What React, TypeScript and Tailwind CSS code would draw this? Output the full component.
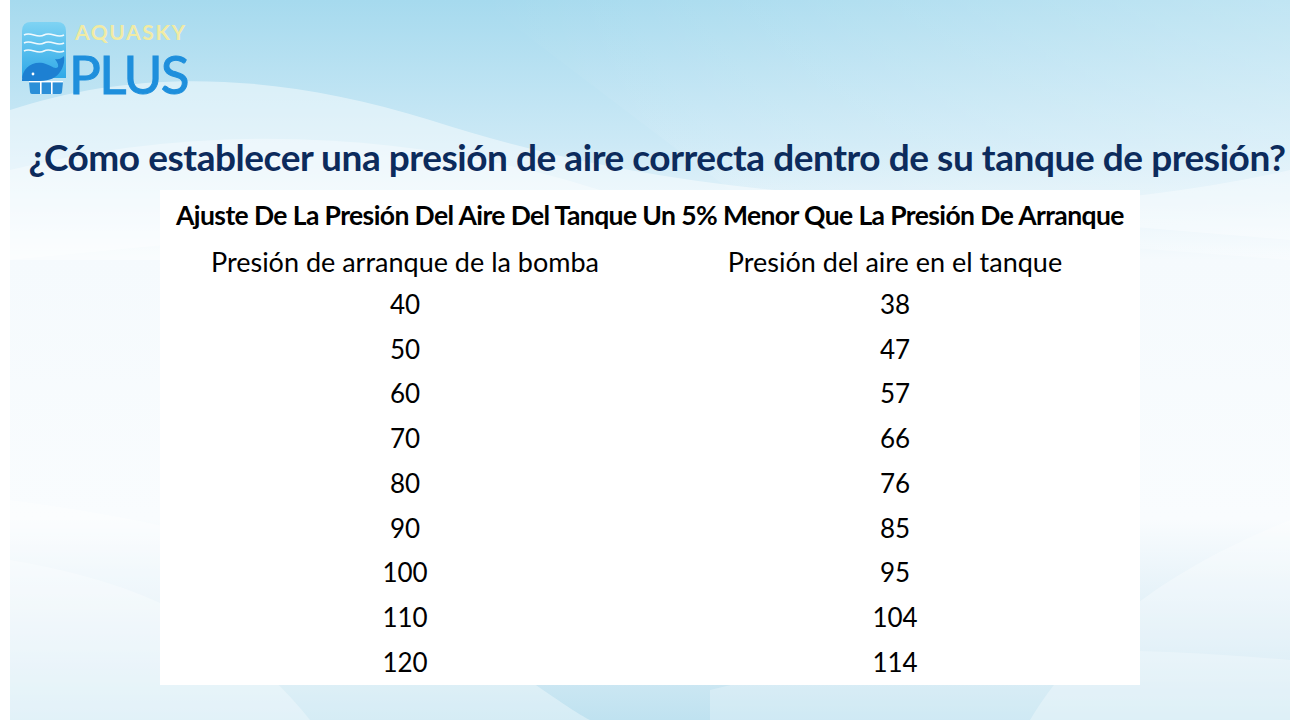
import React from 'react';

const rows: [number, number][] = [
  [40, 38],
  [50, 47],
  [60, 57],
  [70, 66],
  [80, 76],
  [90, 85],
  [100, 95],
  [110, 104],
  [120, 114],
];

// fondo con ondas claras, solo decorativo
function Backdrop() {
  return (
    <svg className="absolute inset-0 h-full w-full" viewBox="0 0 1280 720" preserveAspectRatio="none">
      <defs>
        <linearGradient id="sky" x1="0" y1="0" x2="0" y2="1">
          <stop offset="0" stopColor="#a6daee" />
          <stop offset="0.2" stopColor="#cce9f6" />
          <stop offset="0.36" stopColor="#f5fafd" />
          <stop offset="0.72" stopColor="#f9fcfe" />
          <stop offset="0.88" stopColor="#dcedf6" />
          <stop offset="1" stopColor="#bfe2f0" />
        </linearGradient>
        <linearGradient id="glow" x1="0" y1="0" x2="1" y2="0">
          <stop offset="0" stopColor="#ffffff" stopOpacity="0" />
          <stop offset="1" stopColor="#ffffff" stopOpacity="0.5" />
        </linearGradient>
      </defs>
      <rect width="1280" height="720" fill="url(#sky)" />
      <path d="M470 0 L1280 0 L1280 260 L760 220 Z" fill="url(#glow)" opacity="0.6" />
      <path d="M0 110 C120 70 260 70 420 120 C560 165 700 190 900 200 L900 260 L0 260 Z" fill="#ffffff" opacity="0.45" />
      <path d="M0 170 C200 120 420 130 620 200 L0 260 Z" fill="#ffffff" opacity="0.35" />
      <path d="M1280 170 C1150 200 1000 210 860 205 L1280 240 Z" fill="#ffffff" opacity="0.35" />
      <path d="M0 500 C160 520 320 560 460 640 C520 680 560 710 580 720 L0 720 Z" fill="#ffffff" opacity="0.35" />
      <path d="M0 560 C120 580 220 620 300 720 L0 720 Z" fill="#ffffff" opacity="0.3" />
      <path d="M1280 520 C1180 560 1080 620 1020 720 L1280 720 Z" fill="#ffffff" opacity="0.3" />
      <path d="M700 690 C860 650 1050 640 1280 660 L1280 720 L700 720 Z" fill="#ffffff" opacity="0.25" />
    </svg>
  );
}

function LogoMark() {
  return (
    <svg width="46" height="74" viewBox="0 0 46 74">
      <defs>
        <linearGradient id="bottle" x1="0" y1="0" x2="0" y2="1">
          <stop offset="0" stopColor="#7fd3f3" />
          <stop offset="1" stopColor="#2fa9e8" />
        </linearGradient>
      </defs>
      <path d="M0 9 Q0 0 9 0 L35 0 Q44 0 44 9 L44 56 L0 56 Z" fill="url(#bottle)" />
      <path d="M2 13 C9 9 15 17 22 13 C29 9 35 17 42 13" stroke="#ffffff" strokeWidth="1.6" fill="none" opacity="0.9" />
      <path d="M2 21 C9 17 15 25 22 21 C29 17 35 25 42 21" stroke="#ffffff" strokeWidth="1.6" fill="none" opacity="0.9" />
      <path d="M2 29 C9 25 15 33 22 29 C29 25 35 33 42 29" stroke="#ffffff" strokeWidth="1.6" fill="none" opacity="0.9" />
      <path
        d="M0 58 C0 46 10 39 21 41 C29 43 33 48 36 45 C37 42 34 39 33 37 C37 38 40 36 42 34 C43 40 41 46 38 50 C35 55 28 59 18 59 L0 59 Z"
        fill="#1d80d2"
      />
      <circle cx="11" cy="52" r="1.4" fill="#ffffff" />
      <path d="M7 60 L41 60 L40 70 Q40 72 38 72 L10 72 Q8 72 8 70 Z" fill="#2b8fd8" />
      <rect x="18" y="60" width="1.6" height="12" fill="#ffffff" />
      <rect x="29" y="60" width="1.6" height="12" fill="#ffffff" />
      <rect x="7" y="59" width="34" height="1.4" fill="#ffffff" />
    </svg>
  );
}

function Logo() {
  return (
    <div className="flex items-start gap-[1px]">
      <LogoMark />
      <div className="flex flex-col">
        <span className="ml-[6px] block h-[20px] text-[21px] font-bold leading-[20px] tracking-[1.6px] text-[#f1eba4]">AQUASKY</span>
        <span
          className="mt-[6px] block h-[52px] text-[53px] font-normal leading-[52px] tracking-[-1.6px] text-[#1e8fdc]"
          style={{ WebkitTextStroke: '1px #1e8fdc' }}
        >
          PLUS
        </span>
      </div>
    </div>
  );
}

export default function App() {
  return (
    <div className="flex h-[720px] w-full bg-white pl-[10px] pr-[20px]" style={{ fontFamily: 'Lato, "Open Sans", sans-serif' }}>
      <div className="relative flex-1 overflow-hidden">
        <Backdrop />
        <div className="relative flex h-full flex-col">
          <div className="pl-[12px] pt-[22px]">
            <Logo />
          </div>

          <h1 className="mt-[33px] pl-[14px] text-center text-[37px] font-bold leading-[48px] tracking-[-0.45px] text-[#0c2b5c]">
            ¿Cómo establecer una presión de aire correcta dentro de su tanque de presión?
          </h1>

          <div className="mx-auto mt-[9px] w-[980px] bg-white pt-[10px] text-black">
            <div className="h-[30px] text-center text-[26.5px] font-bold leading-[30px] tracking-[-0.6px]">
              Ajuste De La Presión Del Aire Del Tanque Un 5% Menor Que La Presión De Arranque
            </div>
            <div className="mt-[12px] grid h-[40px] grid-cols-2 items-center text-center text-[27px] leading-[40px]">
              <span>Presión de arranque de la bomba</span>
              <span>Presión del aire en el tanque</span>
            </div>
            <div className="flex flex-col">
              {rows.map(([start, air]) => (
                <div key={start} className="grid h-[44.75px] grid-cols-2 items-center text-center text-[26px]">
                  <span>{start}</span>
                  <span>{air}</span>
                </div>
              ))}
            </div>
          </div>
        </div>
      </div>
    </div>
  );
}
